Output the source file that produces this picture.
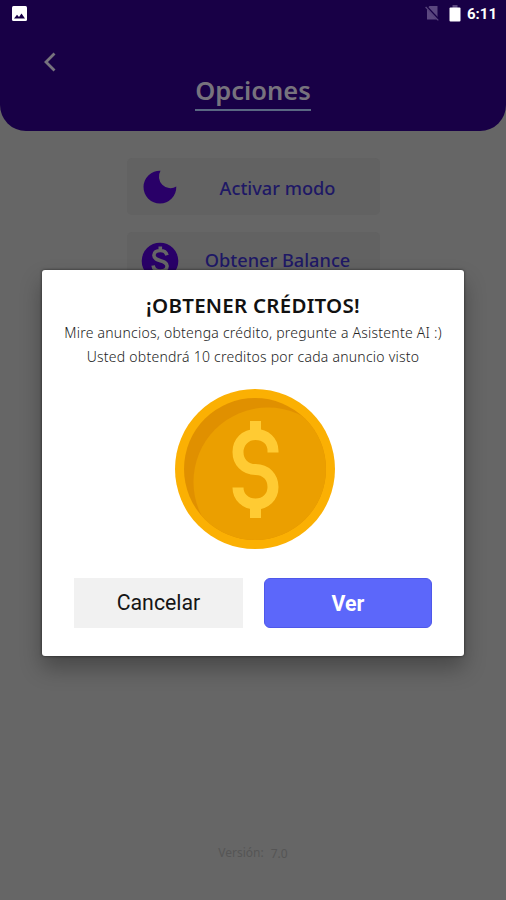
<script setup lang="ts">
import { ref } from "vue"

const time = ref("6:11")
const version = ref("7.0")
const credits = ref(10)
const showDialog = ref(true)

const closeDialog = () => {
  showDialog.value = false
}
</script>

<template>
  <div class="screen">
    <header class="header">
      <!-- status bar -->
      <div class="status">
        <svg class="status-img" width="15" height="15" viewBox="0 0 15 15">
          <rect width="15" height="15" rx="1.5" fill="#fff" />
          <path d="M2 12.5 5 8.7l2 2.2 2.5-3.3 3.5 4.9z" fill="#180046" />
        </svg>
        <svg class="status-sim" width="15" height="16" viewBox="0 0 15 16">
          <path d="M4.5 1H12.5V14.5H2V3.5z" fill="#5b477f" />
          <path d="M0.8 1.2 14 15" stroke="#180046" stroke-width="2.4" />
          <path d="M0.6 2 13.3 15.3" stroke="#5b477f" stroke-width="1.2" />
        </svg>
        <svg class="status-bat" width="12" height="17" viewBox="0 0 12 17">
          <rect x="3.5" y="0" width="5" height="3" fill="#5b477f" />
          <rect x="0.5" y="2.5" width="11" height="14" rx="1" fill="#fff" />
        </svg>
        <span class="time">{{ time }}</span>
      </div>
      <svg class="back" width="14" height="20" viewBox="0 0 14 20">
        <path d="M11.5 1.5 3 10l8.5 8.5" fill="none" stroke="#77737d" stroke-width="2.8" />
      </svg>
      <h1 class="title"><span>Opciones</span></h1>
    </header>

    <main class="options">
      <button class="option">
        <svg class="option-icon" width="38" height="38" viewBox="0 0 38 38">
          <path d="M19.5 2.7A16.4 16.4 0 1 0 35.3 18.6 11.6 11.6 0 0 1 19.500 2.700z" fill="#290068" />
        </svg>
        <span class="option-text">Activar modo</span>
      </button>
      <button class="option">
        <svg class="option-icon" width="38" height="38" viewBox="0 0 38 38">
          <circle cx="19" cy="19" r="18.3" fill="#290068" />
          <path d="M26 13.2C25.2 10 22.8 8.5 19.3 8.5c-3.8 0-6.4 1.9-6.4 4.8 0 6.8 13.2 4 13.2 10.8 0 3-2.8 5-6.800 5-4.200 0-6.800-2-7.200-5.600M19.300 4.500V9M19.300 28.500V33" fill="none" stroke="#666" stroke-width="3.6" />
        </svg>
        <span class="option-text balance">Obtener Balance</span>
      </button>
    </main>

    <footer class="version"><span>Versión:</span><span class="number">{{ version }}</span></footer>

    <!-- rewarded ad dialog -->
    <section v-if="showDialog" class="dialog">
      <h2 class="dialog-title">¡OBTENER CRÉDITOS!</h2>
      <p class="line first">Mire anuncios, obtenga crédito, pregunte a Asistente AI :)</p>
      <p class="line second">Usted obtendrá {{ credits }} creditos por cada anuncio visto</p>
      <svg class="coin" width="160" height="160" viewBox="0 0 160 160">
        <defs>
          <clipPath id="coin-face"><circle cx="80" cy="80" r="71" /></clipPath>
        </defs>
        <circle cx="80" cy="80" r="80" fill="#fbb003" />
        <circle cx="80" cy="80" r="71" fill="#e09000" />
        <circle cx="93" cy="93" r="74.5" fill="#eb9f00" clip-path="url(#coin-face)" />
        <path
          d="M98 63.5V62C98 52 90.5 45.5 80.5 45.5S63 53 63 63C63 73 70 80.5 80.5 80.5S98 88 98 98 90.5 115 80.5 115 63 108 63 98.5"
          fill="none" stroke="#ffcb33" stroke-width="11" />
        <path d="M80.5 32V46M80.5 115V129" stroke="#ffcb33" stroke-width="11" />
      </svg>
      <div class="actions">
        <button class="cancel" @click="closeDialog"><span>Cancelar</span></button>
        <button class="watch"><span>Ver</span></button>
      </div>
    </section>
  </div>
</template>

<style>
body {
  background: #666;
}
</style>

<style scoped>
.screen {
  position: relative;
  display: flex;
  flex-direction: column;
  height: 900px;
  overflow: hidden;
  background: #666;
  font-family: "Noto Sans", "Open Sans", sans-serif;
}
h1, h2, p {
  margin: 0;
}
button {
  padding: 0;
  border: none;
  font-family: inherit;
}
span {
  white-space: nowrap;
}
.header {
  display: flex;
  flex-direction: column;
  height: 131px;
  border-radius: 0 0 26px 26px;
  background: #180046;
}
.status {
  display: flex;
  align-items: center;
  height: 26px;
  padding: 0 9px 0 12px;
}
.status-sim {
  margin-left: auto;
}
.status-bat {
  margin-left: 9px;
}
.time {
  margin-left: 6px;
  padding-top: 1px;
  font: bold 15px/26px Roboto, sans-serif;
  color: #fff;
}
.back {
  margin: 26px 0 0 43px;
}
.title {
  display: flex;
  justify-content: center;
  height: 39px;
  font-size: 25.5px;
  font-weight: 600;
  line-height: 36px;
  color: #77737d;
}
.title span {
  height: 37px;
  border-bottom: 2px solid #596782;
}
.options {
  display: flex;
  flex-direction: column;
  align-items: center;
  gap: 17px;
  padding-top: 27px;
}
.option {
  display: flex;
  align-items: center;
  width: 253px;
  height: 57px;
  padding: 0 14px;
  border-radius: 5px;
  background: #626262;
}
.option-icon {
  flex: none;
}
.option-text {
  flex: 1;
  margin-left: 11px;
  padding-top: 2px;
  font-size: 18.2px;
  font-weight: 500;
  color: #1e1865;
}
.option-text.balance {
  padding-top: 0;
  padding-bottom: 1px;
}
.version {
  display: flex;
  justify-content: center;
  gap: 7px;
  margin-top: auto;
  padding-bottom: 39px;
  font-size: 12px;
  line-height: 17px;
  color: #555;
}
.version .number {
  padding-top: 1px;
  margin-bottom: -1px;
}
.dialog {
  position: absolute;
  top: 270px;
  left: 42px;
  display: flex;
  flex-direction: column;
  align-items: center;
  box-sizing: border-box;
  width: 422px;
  height: 386px;
  padding: 20px 32px 28px;
  border-radius: 3px;
  background: #fff;
  box-shadow: 0 0 3px rgba(0, 0, 0, 0.6), 0 12px 22px rgba(0, 0, 0, 0.3);
}
.dialog-title {
  font-size: 20.5px;
  font-weight: 600;
  line-height: 31px;
  letter-spacing: 0.25px;
  white-space: nowrap;
  color: #111;
}
.line {
  font-size: 14px;
  font-weight: 300;
  line-height: 24px;
  letter-spacing: 0.24px;
  white-space: nowrap;
  color: #222;
}
.coin {
  flex: none;
  margin-top: 20px;
  margin-left: 4px;
}
.actions {
  display: flex;
  justify-content: space-between;
  width: 358px;
  margin-top: auto;
}
.actions button {
  width: 169px;
  height: 50px;
  font: 400 21.3px/50px Roboto, sans-serif;
}
.actions .cancel {
  background: #f1f1f1;
  color: #151515;
}
.actions .watch {
  width: 168px;
  border: 1px solid #4e58ea;
  border-radius: 6px;
  background: #5c67fa;
  font-weight: 700;
  line-height: 50px;
  color: #fff;
}
</style>
